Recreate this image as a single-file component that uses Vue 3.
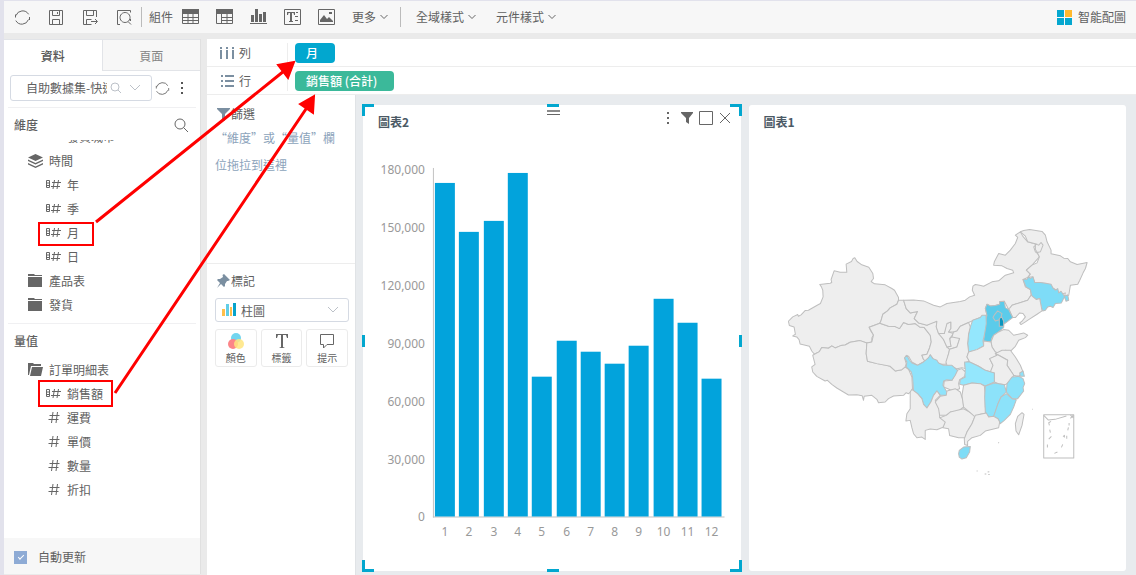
<script setup>
import { ref } from 'vue'

const autoUpdate = ref(true)

const tools = [
  { name: '重新整理', d: 'M2 6.5A7 7 0 0 1 14.6 5.3M14.5 10.5A7 7 0 0 1 1.8 11.6M1.5 8.5v-3M15.5 8v3' },
  { name: '儲存', d: 'M1.5 1.5h13v14h-13zM4.5 1.5v5h7v-5M4.5 15.5v-5h7v5M9.5 3v2' },
  { name: '另存', d: 'M14.5 8V1.5h-13v14h8M4.5 1.5v5h7v-5M4.5 15.5v-5h5M9 12.5h6M13 10l2.5 2.5L13 15' },
  { name: '預覽', d: 'M4 15.5H1.5v-14h13v2M14.5 12v-2M9 3.5a5 5 0 1 0 .1 0M12 12.5l3 3' }
]

const widgets = [
  { name: '表格', fill: 'M0 0h17v5H0z', d: 'M.5 .5h16v14H.5zM.5 8.5h16M.5 11.5h16M6 5v9.5M11 5v9.5' },
  { name: '明細表', fill: 'M0 0h17v5H0z', d: 'M.5 .5h16v14H.5zM5.5 8.5h11M5.5 11.5h11M5.5 5v9.5M11 5v9.5' },
  { name: '圖表', fill: 'M1 6h3v7H1zM5 0h3v13H5zM9 5h3v8H9zM13 3h3v10h-3zM0 14h17v1H0z', d: '' },
  { name: '文字', fill: 'M3 3h8v3h-1l-.5-2H8v8h1v1H5v-1h1V4H4.5L4 6H3zM12 3h2v1h-2zM11 7h3v1h-3zM11 11h3v1h-3z', d: 'M.5 .5h16v15H.5z' },
  { name: '圖片', fill: 'M2 13v-2l4-5 3 4 2-2 4 4v1zM11 3h3v2h-3z', d: 'M.5 .5h16v15H.5z' }
]

const dimensions = [
  { label: '發貨城市', type: 'clipped' },
  { label: '時間', type: 'layers' },
  { label: '年', type: 'field' },
  { label: '季', type: 'field' },
  { label: '月', type: 'field' },
  { label: '日', type: 'field' },
  { label: '產品表', type: 'folder' },
  { label: '發貨', type: 'folder' }
]
const measures = [
  { label: '訂單明細表', type: 'open' },
  { label: '銷售額', type: 'field' },
  { label: '運費', type: 'number' },
  { label: '單價', type: 'number' },
  { label: '數量', type: 'number' },
  { label: '折扣', type: 'number' }
]
const glyphs = {
  layers: { fill: 'M7.5 0L15 3.5 7.5 7 0 3.5zM0 5.5l7.5 3.5L15 5.5V7l-7.5 3.500L0 7zM0 9l7.5 3.5L15 9v1.5L7.5 14 0 10.5z', d: '' },
  folder: { fill: 'M0 0h6l1 1h7v1H0zM0 3h14v10H0z', d: '' },
  open: { fill: 'M0 0h5l1 1h7v2H3L1 12H0zM4 4h11l-2 9H2z', d: '' },
  field: { fill: '', d: 'M.5 2.5h3v7h-3zM.5 5h3M.5 7.5h3M8.500 2L7 11M12.5 2L11 11M6 4.5h9M5 8.5h9' },
  number: { fill: '', d: 'M7 1L5.500 12M11.5 1L10 12M3.5 4.5h10M2.5 8.500h10' },
  clipped: { fill: '', d: '' }
}
const groups = [
  { id: 'dim', title: '維度', items: dimensions },
  { id: 'mea', title: '量值', items: measures }
]

const values = [173000, 147400, 153100, 178000, 72200, 90800, 85300, 79100, 88700, 113000, 100600, 71400]
const ticks = [180000, 150000, 120000, 90000, 60000, 30000, 0]
const yOf = v => 381 - Math.round((v * 348) / 180000)
const xOf = i => 72 + Math.round(i * 24.3)

const base = '#eeeeee'
const light = '#94e7fd'
const blue = '#8ce2fa'
const provinces = [
  { c: base, p: '224,113 231,124 245,134 266,141 278,160 280,175 273,184 283,191 315,194 335,205 343,210 355,232 355,240 350,252 330,263 322,272 308,282 303,300 299,309 267,321 272,332 280,344 275,353 275,365 260,368 240,361 210,366 195,374 182,376 165,383 155,377 145,384 125,382 118,394 103,402 95,392 88,378 60,371 57,358 50,350 38,347 46,342 42,320 28,316 25,303 38,290 53,283 55,288 63,284 75,271 85,270 110,256 121,250 129,230 128,210 124,200 119,193 150,189 155,187 153,178 162,152 180,156 200,156 198,132 214,124 219,115' },
  { c: base, p: '103,402 118,394 125,382 145,384 155,377 165,383 182,376 195,374 210,366 240,361 260,368 258,400 262,423 275,426 290,430 320,435 330,438 345,452 365,448 375,440 385,447 395,470 397,510 385,520 378,517 370,525 340,527 325,535 315,545 295,547 290,537 275,525 252,528 250,540 246,526 230,523 205,524 190,515 170,503 155,492 142,480 135,482 110,468 98,455 95,440 105,432 98,405' },
  { c: base, p: '299,309 325,318 345,319 358,325 370,307 385,313 405,310 418,320 432,322 450,345 453,365 448,383 440,402 425,405 430,418 438,415 430,425 420,430 412,435 395,425 385,408 378,406 373,413 378,430 375,440 365,448 345,452 330,438 290,430 262,423 258,400 260,368 275,365 280,344 267,321' },
  { c: base, p: '355,240 370,240 378,265 390,278 412,274 402,295 415,308 432,312 440,315 455,306 470,303 468,320 475,340 482,342 490,358 500,380 508,387 505,400 497,432 480,432 458,415 450,405 445,415 438,422 430,418 425,405 440,402 448,383 453,365 450,345 432,322 418,320 405,310 385,313 370,307 358,325 345,319 325,318 299,309 303,300 308,282 322,272 330,263 350,252' },
  { c: base, p: '508,355 515,350 520,335 538,355 530,380 508,387 500,380 512,378' },
  { c: base, p: '475,340 492,340 496,320 500,310 512,305 512,325 505,335 520,340 508,355 512,378 500,380 490,358' },
  { c: base, p: '370,240 400,239 430,242 460,255 480,260 500,250 540,244 555,240 568,230 583,225 576,210 578,198 585,193 598,195 610,198 635,185 655,182 675,165 700,158 697,150 680,145 665,137 640,135 642,125 655,100 675,105 690,90 705,70 712,52 705,45 720,35 727,48 742,65 765,72 770,90 775,97 772,100 777,110 755,135 738,150 750,162 742,172 728,178 735,200 750,208 752,225 742,240 695,255 690,262 685,268 672,243 658,245 658,252 645,256 630,257 620,252 615,265 620,285 600,292 580,300 565,307 540,318 530,332 520,335 505,335 512,325 512,305 500,310 492,340 475,340 468,320 470,303 440,315 415,308 402,295 412,274 390,278 378,265' },
  { c: base, p: '720,35 730,31 748,28 785,34 795,45 800,65 812,90 812,101 840,107 850,114 862,115 870,125 890,133 920,127 915,145 908,158 898,180 892,192 870,195 865,225 852,228 855,218 842,222 832,213 820,205 800,190 775,188 763,187 757,170 742,172 750,162 738,150 755,135 770,128 777,110 772,100 765,95 760,80 770,72 742,65 735,48' },
  { c: base, p: '765,72 775,75 782,67 788,75 780,95 771,97 765,88' },
  { c: '#7edcf7', p: '728,178 740,177 745,170 750,175 758,170 763,187 780,187 800,190 812,192 818,204 825,210 832,205 835,218 842,213 852,228 862,224 865,240 857,243 852,230 848,238 843,248 825,250 818,262 810,258 802,260 795,270 787,272 783,262 778,235 768,238 755,230 750,208 737,200' },
  { c: base, p: '752,225 768,238 778,235 785,272 770,282 745,298 735,305 722,313 718,308 725,303 735,290 728,280 718,278 705,292 697,292 685,265 690,262 695,255 742,240' },
  { c: '#5bcbea', p: '620,252 630,257 645,256 658,252 658,244 672,243 675,262 685,268 692,282 697,292 680,305 670,312 670,322 655,335 640,345 634,355 632,365 610,362 612,345 615,300 620,285 615,265' },
  { c: '#5bcbea', p: '638,292 643,283 652,272 665,280 660,298 645,302' },
  { c: '#0996bf', p: '657,295 664,290 670,303 670,318 657,318' },
  { c: light, p: '577,300 600,292 605,285 617,285 618,310 613,340 608,362 610,377 590,388 565,395 562,370 565,340 570,320' },
  { c: base, p: '565,307 570,320 565,340 562,370 565,395 560,410 568,422 553,428 555,445 545,442 530,445 500,435 497,425 505,400 508,387 530,380 538,355 515,350 520,335 530,332 540,318' },
  { c: base, p: '632,365 640,345 655,335 670,328 685,330 700,345 730,338 742,345 735,352 715,360 705,378 690,393 675,390 660,402 645,395 635,380' },
  { c: base, p: '565,395 590,388 610,377 610,362 632,365 635,380 645,395 660,402 628,415 638,435 642,458 615,450 595,438 568,425 560,410' },
  { c: base, p: '645,400 665,390 690,390 705,410 720,435 728,455 715,468 700,465 680,435 682,420 655,405' },
  { c: base, p: '645,400 655,405 682,420 680,435 700,465 690,485 675,493 655,490 642,485 642,458 630,455 638,435 628,415 650,405' },
  { c: light, p: '553,425 568,425 595,438 615,450 642,458 642,485 615,497 600,490 575,488 550,495 538,492 540,478 555,470 548,455 555,450' },
  { c: base, p: '530,450 545,445 555,455 553,468 538,478 535,490 538,505 525,510 510,508 490,500 492,482 515,480 525,460' },
  { c: '#8fe3fb', p: '373,413 380,405 388,420 395,428 412,435 430,425 438,418 445,412 450,403 458,415 470,420 475,428 490,435 515,435 532,450 525,465 515,480 500,478 490,482 488,495 500,515 498,525 480,525 470,512 460,525 452,545 440,563 430,552 425,535 412,520 400,512 397,470 393,455 378,440 380,425' },
  { c: base, p: '390,515 395,507 412,520 425,535 430,552 440,563 452,545 460,525 470,512 480,525 465,540 468,548 478,560 478,590 500,602 490,620 470,628 450,626 435,630 435,657 425,650 410,652 400,640 395,622 390,600 377,602 380,580 390,565' },
  { c: base, p: '480,528 498,525 500,512 525,505 540,515 548,540 550,560 530,575 510,575 498,585 478,585 475,565 465,545' },
  { c: base, p: '478,592 498,585 510,575 550,565 568,575 585,585 575,610 560,635 555,652 535,652 508,645 505,625 488,622 495,605' },
  { c: base, p: '550,495 575,488 600,490 612,497 615,525 615,560 618,578 600,582 585,590 568,575 550,560 545,525' },
  { c: blue, p: '615,497 642,488 655,490 672,493 678,515 662,530 653,550 645,575 640,588 625,590 615,575 613,530' },
  { c: blue, p: '680,490 695,470 715,468 728,475 733,490 728,502 730,512 712,535 695,535 678,515' },
  { c: blue, p: '718,458 728,452 732,468 720,468' },
  { c: blue, p: '662,530 678,520 695,535 708,538 700,560 690,582 672,600 660,610 653,595 640,588 653,550' },
  { c: base, p: '585,585 600,582 618,578 625,590 640,588 653,595 658,605 655,622 615,632 600,645 575,652 562,663 562,675 553,672 552,655 560,635 575,610' },
  { c: '#7fdcf6', p: '535,700 537,690 550,680 570,678 568,695 558,712 545,716 537,710' },
  { c: base, p: '705,610 712,588 725,577 731,582 725,615 715,643 707,632' }
]
const seaMarks = 'M812 603l-7 4 2 8M808 628l2 9M813 648l-8 8M801 672v9M822 699l9-4M843 681l4-9M848 649l4-4v6M859 646v9M864 621l-2 9M866 608v7M790 585l14 14 20-2 34-10M870 584l8 8v-7l-8 9M656 666l-2 2M589 752h3M613 761l5 0M622 755l5-1M624 762h4M755 567h2'
</script>

<template>
  <div class="app">
    <header class="toolbar">
      <button v-for="t in tools" :key="t.name" class="tool" :aria-label="t.name">
        <svg class="ico" width="17" height="17" viewBox="0 0 17 17"><path :d="t.d" /></svg>
      </button>
      <span class="bar first"></span>
      <span class="caption">組件</span>
      <button v-for="w in widgets" :key="w.name" class="tool" :aria-label="w.name">
        <svg class="ico" width="17" height="16" viewBox="0 0 17 16"><path :d="w.d" /><path class="solid" :d="w.fill" /></svg>
      </button>
      <button class="menu">更多<svg class="ico" width="8" height="6" viewBox="0 0 8 6"><path d="M.5 1L4 4.5 7.5 1" /></svg></button>
      <span class="bar second"></span>
      <button class="menu wide">全域樣式<svg class="ico" width="8" height="6" viewBox="0 0 8 6"><path d="M.5 1L4 4.5 7.5 1" /></svg></button>
      <button class="menu wide">元件樣式<svg class="ico" width="8" height="6" viewBox="0 0 8 6"><path d="M.5 1L4 4.5 7.5 1" /></svg></button>
      <button class="menu smart">
        <svg width="15" height="15" viewBox="0 0 15 15"><path fill="#05a7cf" d="M0 0h7v7H0zM0 8h7v7H0zM8 8h7v7H8z" /><path fill="#ffb92d" d="M8 0h7v7H8z" /></svg>智能配圖
      </button>
    </header>

    <div class="body">
      <aside class="data">
        <nav class="tabs">
          <button class="tab active">資料</button>
          <button class="tab">頁面</button>
        </nav>
        <div class="source">
          <div class="combo">
            <select aria-label="數據集"><option>自助數據集-快速入門</option></select>
            <svg class="ico pale" width="32" height="12" viewBox="0 0 32 12"><circle cx="5" cy="5" r="4" /><path d="M8 8l3 3M20 3l5 5 5-5" /></svg>
          </div>
          <button class="tool" aria-label="重新載入"><svg class="ico" width="15" height="15" viewBox="0 0 17 17"><path :d="tools[0].d" /></svg></button>
          <button class="tool" aria-label="更多選項"><svg width="4" height="13" viewBox="0 0 4 13"><path fill="#555" d="M1 0h2v2H1zM1 5h2v2H1zM1 10h2v2H1z" /></svg></button>
        </div>
        <section v-for="g in groups" :key="g.id" class="group" :class="g.id">
          <h2>{{ g.title }}
            <button v-if="g.id === 'dim'" class="tool" aria-label="搜尋"><svg class="ico" width="15" height="15" viewBox="0 0 15 15"><circle cx="6" cy="6" r="5" /><path d="M9.5 9.5L14 14" /></svg></button>
          </h2>
          <div class="scroll">
            <ul>
              <li v-for="f in g.items" :key="f.label" :class="f.type">
                <svg class="ico" width="15" height="14" viewBox="0 0 15 14"><path :d="glyphs[f.type].d" /><path class="solid" :d="glyphs[f.type].fill" /></svg>
                <span>{{ f.label }}</span>
              </li>
            </ul>
          </div>
        </section>
        <label class="auto"><input v-model="autoUpdate" type="checkbox" />自動更新</label>
      </aside>

      <main class="work">
        <div class="shelf">
          <div class="shelf-name"><svg class="slate" width="14" height="14" viewBox="0 0 14 14"><path d="M0 1h2v2H0zM6 1h2v2H6zM12 1h2v2h-2zM0 4h2v9H0zM6 4h2v9H6zM12 4h2v9h-2z" /></svg>列</div>
          <button class="pill month">月</button>
        </div>
        <div class="shelf">
          <div class="shelf-name"><svg class="slate" width="14" height="14" viewBox="0 0 14 14"><path d="M1 1h2v2H1zM1 6h2v2H1zM1 11h2v2H1zM5 1h9v2H5zM5 6h9v2H5zM5 11h9v2H5z" /></svg>行</div>
          <button class="pill sales">銷售額 (合計)</button>
        </div>
        <div class="lower">
          <div class="settings">
            <section class="filter">
              <h3><svg class="slate" width="13" height="13" viewBox="0 0 13 13"><path d="M0 0h13v1L8 6v7l-3-2V6L0 1z" /></svg>篩選</h3>
              <p>“維度”或“量值”欄位拖拉到這裡</p>
            </section>
            <section class="marks">
              <h3><svg class="slate" width="13" height="14" viewBox="0 0 13 14"><path d="M7 0l6 6-2 1h-1l-2 3v2l-1 1-3-3-4 4 3-5-3-3 1-1h2l3-2-.5-2z" /></svg>標記</h3>
              <div class="combo kind">
                <svg class="lead" width="14" height="13" viewBox="0 0 14 13"><path fill="#ffbf4a" d="M0 6h3v7H0zM8 4h2v9H8z" /><path fill="#62cde5" d="M4 1h3v12H4z" /><path fill="#06a3cb" d="M11 0h3v13h-3z" /></svg>
                <select aria-label="圖形類型"><option>柱圖</option></select>
                <svg class="ico pale" width="12" height="8" viewBox="0 0 12 8"><path d="M1 1l5 5 5-5" /></svg>
              </div>
              <div class="trio">
                <button><svg width="18" height="18" viewBox="0 0 18 18"><circle cx="9" cy="6" r="5" fill="#72d5ef" /><circle cx="6" cy="12" r="5" fill="#fc8588" /><circle cx="12" cy="12" r="5" fill="#ffe57f" opacity=".85" /></svg>顏色</button>
                <button><svg width="18" height="18" viewBox="0 0 18 18"><path fill="#666" d="M3 2h12v4h-1l-1-3h-3v12l2 1H6l2-1V3H5L4 6H3z" /></svg>標籤</button>
                <button><svg class="ico" width="18" height="18" viewBox="0 0 18 18"><path d="M2.5 2.5h13v10H9L5.5 16v-3.5h-3z" /></svg>提示</button>
              </div>
            </section>
          </div>

          <div class="canvas">
            <article class="card">
              <div class="card-head">
                <h4>圖表2</h4>
                <svg class="ico" width="64" height="16" viewBox="0 0 64 16"><path class="solid" d="M1 2h2v2H1zM1 7h2v2H1zM1 12h2v2H1zM15 2h12v1l-4 5v6l-3-2V8l-5-5z" /><path d="M33.5 1.5h13v13h-13zM54 3l10 10M64 3L54 13" /></svg>
              </div>
              <svg class="plot" viewBox="0 0 378 435" role="img" aria-label="圖表2">
                <path class="axis" d="M70.5 32v350M70 381.5h292" />
                <text v-for="t in ticks" :key="t" x="62" :y="yOf(t) + 5" text-anchor="end">{{ t.toLocaleString('en-US') }}</text>
                <rect v-for="(v, i) in values" :key="i" :x="xOf(i)" :y="yOf(v)" width="20" :height="381 - yOf(v)" fill="#02a3dc" />
                <text v-for="(v, i) in values" :key="'m' + i" :x="xOf(i) + 10" y="401" text-anchor="middle">{{ i + 1 }}</text>
              </svg>
              <i class="corner tl"></i><i class="corner tr"></i><i class="corner bl"></i><i class="corner br"></i>
              <i class="edge top"></i><i class="edge bottom"></i><i class="edge left"></i><i class="edge right"></i>
              <i class="grip"></i>
            </article>
            <article class="card">
              <div class="card-head"><h4>圖表1</h4></div>
              <svg class="map" viewBox="-93 -252 1131 1290" role="img" aria-label="圖表1">
                <polygon v-for="(r, i) in provinces" :key="i" :points="r.p" :fill="r.c" />
                <path :d="seaMarks" />
                <path d="M790 583h90v130h-90z" />
              </svg>
            </article>
          </div>
        </div>
      </main>
    </div>

    <svg class="guides" width="420" height="420" viewBox="0 0 420 420">
      <rect x="39" y="223" width="54" height="22" />
      <rect x="39" y="381" width="73" height="25" />
      <path class="line" d="M96 222L284 71M115 393L308 106" />
      <path class="head" d="M294 62L278 65 288 78zM314 96L300 104 313 113z" />
    </svg>
  </div>
</template>

<style>
body {
  margin: 0;
  background: #eaeaea;
}
</style>

<style scoped>
.app {
  position: relative;
  box-sizing: border-box;
  min-height: 100vh;
  display: flex;
  flex-direction: column;
  border-left: 4px solid #e2e2ec;
  border-top: 1px solid #e2e2ec;
  background: #eaeaea;
  color: #606060;
  font: 12px/24px "Noto Sans CJK TC", "Noto Sans", sans-serif;
}
button, select {
  font: inherit;
  color: inherit;
  border: 0;
  padding: 0;
  background: none;
}
h2, h3, h4, p, ul { margin: 0; padding: 0; font-size: 12px; }
svg { display: block; flex: none; }
.ico { fill: none; stroke: #666; }
.ico .solid { fill: #666; stroke: none; }
.ico.pale { stroke: #bcc1c8; }
.slate { fill: #7b8fa1; }
.tool { display: flex; }

.toolbar {
  display: flex;
  align-items: center;
  height: 32px;
  padding: 0 10px;
  background: #f7f7f7;
}
.toolbar .tool { margin-right: 17px; }
.bar { width: 1px; height: 20px; background: #bbb; }
.bar.first { margin-left: -9px; }
.bar.second { margin: 0 15px 0 12px; }
.caption { margin: 0 9px 0 7px; }
.menu { display: flex; align-items: center; gap: 4px; }
.menu.wide { margin-right: 20px; }
.menu.smart { margin: 0 0 0 auto; gap: 6px; }

.body {
  flex: 1;
  display: flex;
  gap: 6px;
  padding-top: 6px;
}
.data {
  box-sizing: border-box;
  width: 197px;
  flex: none;
  display: flex;
  flex-direction: column;
  background: #fff;
  border-right: 1px solid #e0e0e0;
  margin-bottom: 1px;
}
.tabs { display: flex; height: 32px; }
.tab {
  flex: 1;
  padding-top: 2px;
  background: #f7f7f7;
  color: #858585;
  border-top: 1px solid #e2e4e8;
  border-left: 1px solid #e2e4e8;
  border-bottom: 1px solid #e2e4e8;
}
.tab.active {
  background: #fff;
  color: #555;
  font-weight: 500;
  border-left: 0;
  border-bottom-color: #fff;
}
.source {
  display: flex;
  align-items: center;
  gap: 3px;
  margin: 0 4px;
  padding: 4px 2px 6px;
  border-bottom: 1px solid #f0f0f2;
}
.source .tool + .tool { margin-left: 7px; }
.combo { position: relative; display: flex; width: 142px; }
.combo select {
  appearance: none;
  box-sizing: border-box;
  width: 100%;
  height: 26px;
  padding: 0 44px 0 15px;
  border: 1px solid #d5dae3;
  border-radius: 3px;
  background: #fff;
  text-overflow: clip;
}
.combo .ico { position: absolute; right: 10px; top: 7px; }
.group { padding: 0 4px; }
.group h2 {
  display: flex;
  align-items: center;
  justify-content: space-between;
  height: 24px;
  padding: 5px 7px 3px 6px;
  font-weight: 500;
}
.scroll { overflow: hidden; }
.group ul { list-style: none; }
.dim ul { margin-top: -15px; }
.dim .scroll { padding-bottom: 6px; border-bottom: 1px solid #f0f0f2; }
.mea h2 { padding-bottom: 5px; }
.group li {
  display: flex;
  align-items: center;
  gap: 6px;
  height: 24px;
  padding-left: 20px;
}
.group li.field, .group li.number, .group li.clipped { padding-left: 38px; }
.auto {
  display: flex;
  align-items: center;
  gap: 11px;
  height: 34px;
  margin-top: auto;
  padding: 2px 0 0 10px;
  background: #f7f7f7;
}
.auto input {
  appearance: none;
  box-sizing: border-box;
  width: 13px;
  height: 13px;
  margin: 0;
  padding: 3px 0 0 3px;
  border: 1px solid #8eabd5;
}
.auto input:checked { background: #8eabd5; }
.auto input:checked::after {
  content: "";
  display: block;
  width: 5px;
  height: 2px;
  border-left: 1px solid #fff;
  border-bottom: 1px solid #fff;
  transform: rotate(-45deg);
}

.work { flex: 1; min-width: 0; display: flex; flex-direction: column; }
.shelf {
  display: flex;
  align-items: center;
  height: 27px;
  border-bottom: 1px solid #ededed;
  background: #fff;
}
.shelf-name {
  box-sizing: border-box;
  display: flex;
  align-items: center;
  gap: 5px;
  width: 81px;
  height: 20px;
  padding-left: 13px;
  border-right: 1px solid #ededed;
}
.pill {
  height: 20px;
  line-height: 20px;
  margin-left: 7px;
  padding: 0 17px 0 11px;
  border-radius: 4px;
  color: #fff;
  font-weight: 500;
}
.month { background: #02a7cf; }
.sales { background: #3bb99a; }
.lower { flex: 1; display: flex; }
.settings {
  width: 148px;
  flex: none;
  background: #fff;
  border-right: 1px solid #e0e3e6;
}
.settings h3 {
  display: flex;
  align-items: center;
  gap: 1px;
  padding-left: 10px;
  font-weight: 400;
}
.filter {
  height: 161px;
  padding-top: 7px;
  border-bottom: 1px solid #ededed;
}
.filter h3 { margin-bottom: -2px; }
.filter p {
  padding: 0 16px 0 8px;
  line-height: 27px;
  color: #8ca3bb;
}
.marks { padding-top: 5px; }
.marks .combo { width: 134px; margin: 5px 0 7px 8px; }
.marks .kind select { height: 24px; padding: 0 30px 0 25px; }
.kind .lead { position: absolute; left: 7px; top: 5px; }
.kind .ico { top: 8px; }
.trio { display: flex; gap: 4px; margin: 0 7px 0 8px; }
.trio button {
  flex: 1;
  display: flex;
  flex-direction: column;
  align-items: center;
  padding: 2px 0 0;
  border: 1px solid #ebebeb;
  border-radius: 3px;
  font-size: 10px;
  line-height: 16px;
}

.canvas {
  flex: 1;
  display: flex;
  gap: 8px;
  padding: 10px 10px 4px 7px;
  background: #e8ebee;
}
.card {
  position: relative;
  flex: 1;
  min-width: 0;
  background: #fff;
  border-radius: 3px;
}
.card-head {
  box-sizing: border-box;
  display: flex;
  justify-content: space-between;
  height: 31px;
  padding: 5px 11px 0 15px;
}
h4 { color: #4b5965; font-weight: 700; }
.plot, .map { width: 100%; height: auto; }
.plot text { fill: #999; font-family: "Noto Sans", sans-serif; font-size: 12px; }
.axis { fill: none; stroke: #c2c2c2; }
.map { fill: none; stroke: #bebebe; stroke-width: 3; stroke-linejoin: round; }
.corner, .edge, .grip { position: absolute; box-sizing: border-box; }
.corner { width: 12px; height: 12px; border: 0 solid #02a7cf; }
.tl { left: -1px; top: -1px; border-width: 3px 0 0 3px; }
.tr { right: -1px; top: -1px; border-width: 3px 3px 0 0; }
.bl { left: -1px; bottom: -1px; border-width: 0 0 3px 3px; }
.br { right: -1px; bottom: -1px; border-width: 0 3px 3px 0; }
.edge { background: #02a7cf; }
.edge.top, .edge.bottom { left: calc(50% - 5px); width: 12px; height: 3px; }
.edge.top { top: -1px; }
.edge.bottom { bottom: -1px; }
.edge.left, .edge.right { top: calc(50% - 3px); width: 3px; height: 12px; }
.edge.left { left: -1px; }
.edge.right { right: -1px; }
.grip {
  left: calc(50% - 5px);
  top: 5px;
  width: 13px;
  height: 5px;
  border-top: 2px solid #8a8a8a;
  border-bottom: 1px solid #666;
}
.guides {
  position: absolute;
  left: -4px;
  top: -1px;
  pointer-events: none;
  fill: none;
  stroke: #f00;
  stroke-width: 2;
}
.guides .line { stroke-width: 3; }
.guides .head { fill: #f00; stroke: #f00; }
</style>
